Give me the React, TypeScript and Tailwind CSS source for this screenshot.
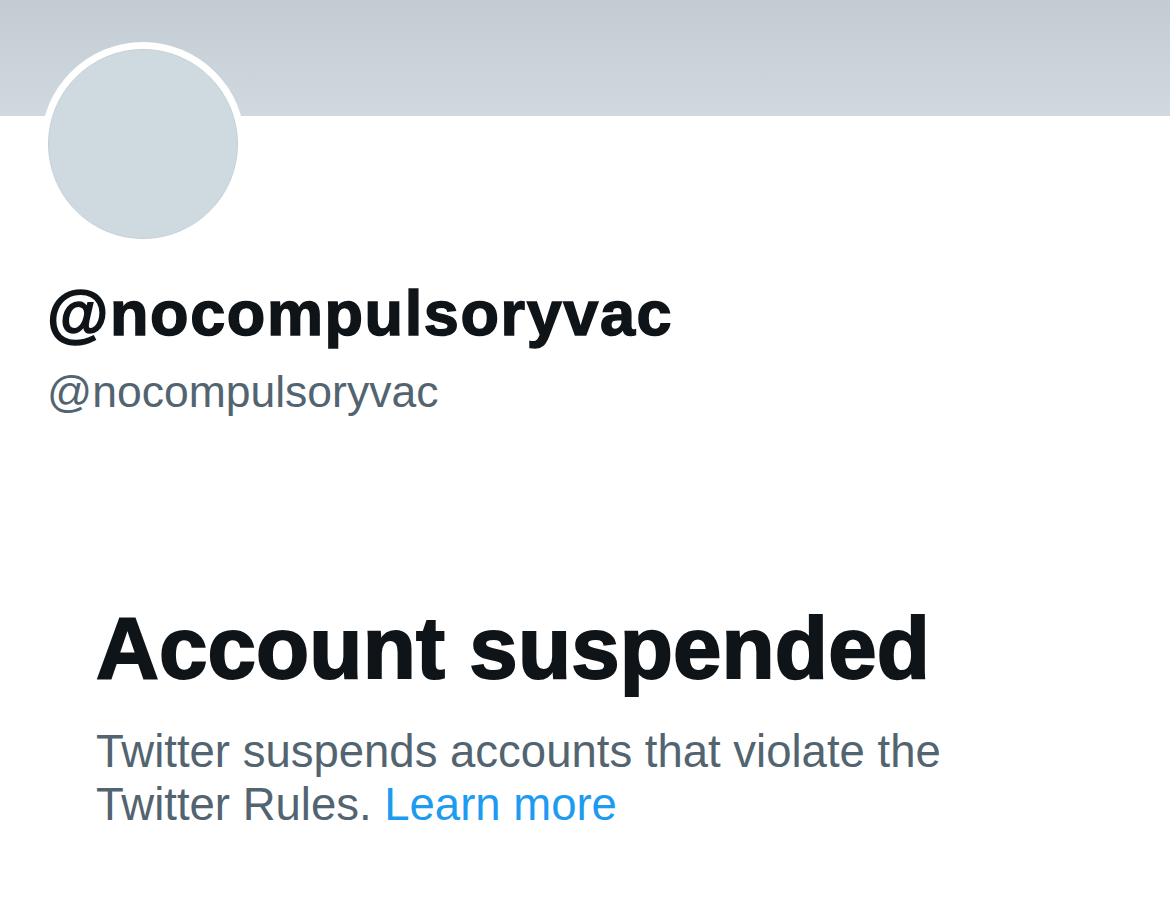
import React from "react";

export default function App() {
  return (
    <div className="w-[1170px] h-[920px] bg-white overflow-hidden" style={{ fontFamily: '"Liberation Sans", Arial, sans-serif' }}>
      <div className="h-[116px] w-full bg-gradient-to-b from-[#c3ccd3] to-[#d0d9df]" />
      <div className="pl-[41px] -mt-[74px]">
        <div className="w-[204px] h-[204px] rounded-full bg-white p-[7px]">
          <div className="w-full h-full rounded-full bg-[#cfd9e0] border border-[#c6d0d8]" />
        </div>
      </div>
      <div className="pl-[47px] mt-[31px]">
        <div className="text-[63px] leading-[72px] font-bold text-[#0f1419] tracking-[1.6px] [-webkit-text-stroke:1.5px_#0f1419]">@nocompulsoryvac</div>
        <div className="mt-[17px] text-[44.5px] leading-[52px] text-[#536471]">@nocompulsoryvac</div>
      </div>
      <div className="pl-[96px] mt-[180px]">
        <div className="text-[87px] leading-[100px] font-bold text-[#0f1419] tracking-[0.15px] [-webkit-text-stroke:2px_#0f1419]">Account suspended</div>
        <p className="mt-[27px] w-[900px] text-[45.5px] leading-[53px] text-[#536471]">
          Twitter suspends accounts that violate the Twitter Rules. <span className="text-[#1d9bf0]">Learn more</span>
        </p>
      </div>
    </div>
  );
}
